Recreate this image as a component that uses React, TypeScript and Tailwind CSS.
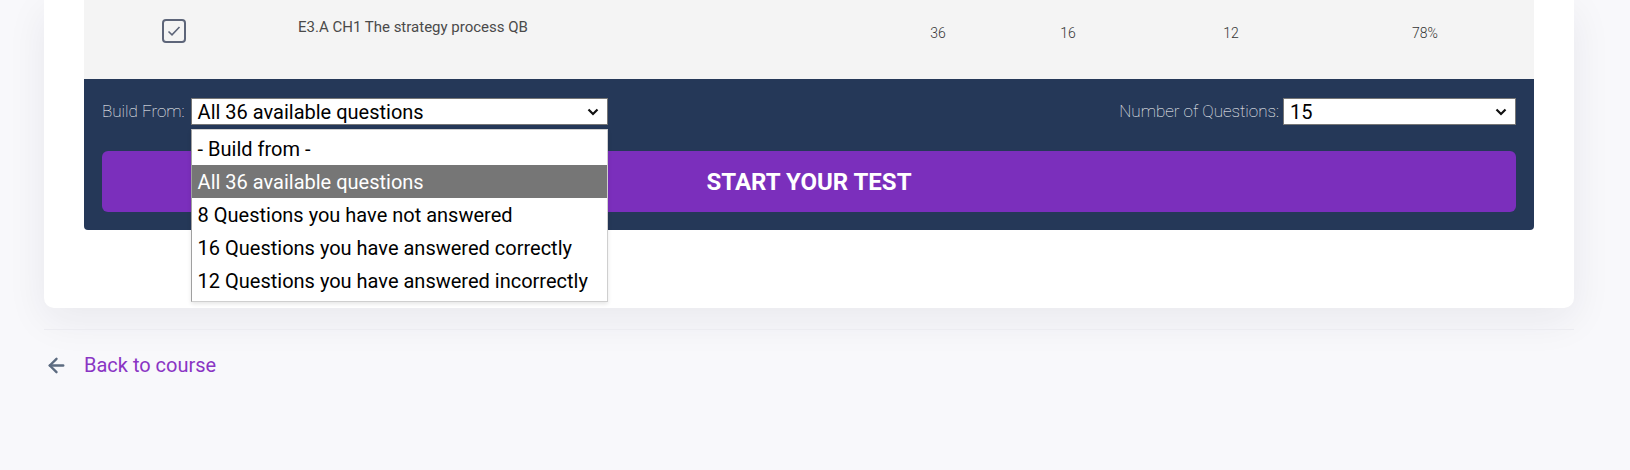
import { ArrowLeft } from 'lucide-react'

const font = { fontFamily: 'Roboto, "Noto Sans", sans-serif' }

const options = [
  '- Build from -',
  'All 36 available questions',
  '8 Questions you have not answered',
  '16 Questions you have answered correctly',
  '12 Questions you have answered incorrectly',
]

function Chevron() {
  return (
    <svg width="12" height="8" viewBox="0 0 12 8" className="shrink-0">
      <path d="M1.5 1.5 L6 6 L10.5 1.5" fill="none" stroke="#111" strokeWidth="2.2" />
    </svg>
  )
}

function FakeSelect({ value, width }: { value: string; width: string }) {
  return (
    <div
      className={`${width} h-[27px] bg-white border border-[#767676] flex items-center justify-between pl-[6px] pr-[8px] text-[20px] text-black leading-none`}
    >
      <span>{value}</span>
      <Chevron />
    </div>
  )
}

function CheckBox() {
  return (
    <div className="w-[24px] h-[24px] rounded-[4px] border-2 border-[#5d6579] flex items-center justify-center">
      <svg width="14" height="12" viewBox="0 0 14 12">
        <path d="M1.5 6.5 L5 9.8 L12.5 2" fill="none" stroke="#5d6579" strokeWidth="1.6" />
      </svg>
    </div>
  )
}

export default function App() {
  return (
    <div className="min-h-[470px] bg-[#f8f8fb] overflow-hidden" style={font}>
      <div className="ml-[44px] w-[1530px]">
        <div className="bg-white rounded-b-[10px] px-[40px] pb-[78px] shadow-[0_12px_40px_rgba(30,30,60,0.07)]">
          {/* course row */}
          <div className="h-[79px] bg-[#f4f4f4] flex items-start text-[14px]">
            <div className="w-[180px] flex justify-center pt-[19px]">
              <CheckBox />
            </div>
            <div className="w-[609px] pl-[34px] pt-[17px] leading-[20px] text-[15px] text-[#4a4a4a]">
              E3.A CH1 The strategy process QB
            </div>
            <div className="w-[130px] text-center pt-[23px] leading-[20px] font-light text-[#333]">36</div>
            <div className="w-[130px] text-center pt-[23px] leading-[20px] font-light text-[#333]">16</div>
            <div className="w-[196px] text-center pt-[23px] leading-[20px] font-light text-[#333]">12</div>
            <div className="w-[192px] text-center pt-[23px] leading-[20px] font-light text-[#333]">78%</div>
          </div>

          {/* builder panel */}
          <div className="bg-[#253858] rounded-b-[4px] px-[18px] pt-[19px] pb-[18px]">
            <div className="flex items-center justify-between">
              <div className="flex items-center gap-[6px] relative">
                <span className="text-[17px] font-thin text-white">Build From:</span>
                <FakeSelect value="All 36 available questions" width="w-[417px]" />
                <div className="absolute right-0 top-[31px] w-[417px] bg-white border border-[#cfcfcf] border-l-[#a0a0a0] pt-[2px] pb-[4px] z-10 shadow-[0_2px_4px_rgba(0,0,0,0.1)]">
                  {options.map((o, i) => (
                    <div
                      key={o}
                      className={`h-[33px] flex items-center pl-[6px] text-[20px] ${
                        i === 1 ? 'bg-[#767676] text-white' : 'text-black'
                      }`}
                    >
                      {o}
                    </div>
                  ))}
                </div>
              </div>
              <div className="flex items-center gap-[4px]">
                <span className="text-[17px] font-thin text-white">Number of Questions:</span>
                <FakeSelect value="15" width="w-[233px]" />
              </div>
            </div>
            <button className="mt-[26px] w-full h-[61px] rounded-[6px] bg-[#7b2fbc] text-white text-[24px] font-bold uppercase">
              Start your test
            </button>
          </div>
        </div>

        <div className="mt-[21px] h-px bg-[#ececf1]" />

        <a href="#" className="mt-[23px] flex items-center gap-[16px] pl-[1px]">
          <ArrowLeft size={23} strokeWidth={2.5} color="#5c6b80" />
          <span className="text-[20px] leading-[24px] text-[#8a35c4]">Back to course</span>
        </a>
      </div>
    </div>
  )
}
